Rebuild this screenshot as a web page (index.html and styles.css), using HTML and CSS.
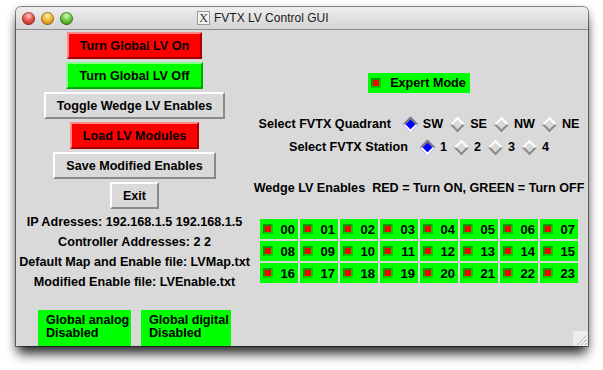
FILE: index.html
```html
<!DOCTYPE html>
<html lang="en">
  <head>
    <meta charset="UTF-8" />
    <title>FVTX LV Control GUI</title>
    <link rel="stylesheet" href="styles.css">
  </head>
  <body>
    <div class="window">
      <div class="titlebar">
        <div class="lights">
          <span class="light close"></span>
          <span class="light minimize"></span>
          <span class="light zoom"></span>
        </div>
        <div class="title"><span class="x-icon">X</span>FVTX LV Control GUI</div>
      </div>
      <div class="content">
        <div class="left">
          <button class="tk red">Turn Global LV On</button>
          <button class="tk green">Turn Global LV Off</button>
          <button class="tk">Toggle Wedge LV Enables</button>
          <button class="tk red">Load LV Modules</button>
          <button class="tk">Save Modified Enables</button>
          <button class="tk">Exit</button>
          <div class="info">
            <p>IP Adresses: 192.168.1.5 192.168.1.5</p>
            <p>Controller Addresses: 2 2</p>
            <p>Default Map and Enable file: LVMap.txt</p>
            <p>Modified Enable file: LVEnable.txt</p>
          </div>
          <div class="status-row">
            <div class="status">Global analog<br>Disabled</div>
            <div class="status">Global digital<br>Disabled</div>
          </div>
        </div>
        <div class="right">
          <label class="expert"><span class="ind"></span>Expert Mode</label>
          <div class="radio-row">
            <span class="radio-label">Select FVTX Quadrant</span>
            <span class="option"><span class="diamond on"></span>SW</span>
            <span class="option"><span class="diamond"></span>SE</span>
            <span class="option"><span class="diamond"></span>NW</span>
            <span class="option"><span class="diamond"></span>NE</span>
          </div>
          <div class="radio-row">
            <span class="radio-label">Select FVTX Station</span>
            <span class="option"><span class="diamond on"></span>1</span>
            <span class="option"><span class="diamond"></span>2</span>
            <span class="option"><span class="diamond"></span>3</span>
            <span class="option"><span class="diamond"></span>4</span>
          </div>
          <div class="legend">Wedge LV Enables  RED = Turn ON, GREEN = Turn OFF</div>
          <div class="wedges" id="wedges">
            <!-- Wedge cells are added here -->
          </div>
        </div>
      </div>
      <svg class="grip" width="15" height="15" viewBox="0 0 15 15">
        <rect width="15" height="15" fill="#ececec" />
        <path d="M4 14 L14 4 M8 14 L14 8 M12 14 L14 12" stroke="#8a8a8a" stroke-width="1" stroke-dasharray="1 1" />
      </svg>
    </div>
    <script>
      const wedges = document.getElementById("wedges");

      for (let i = 0; i < 24; i++) {
        const cell = document.createElement("label");
        cell.className = "wedge";
        cell.innerHTML = `<span class="ind"></span><span>${String(i).padStart(2, "0")}</span>`;
        wedges.appendChild(cell);
      }
    </script>
  </body>
</html>
```

FILE: styles.css
```css
body {
  margin: 0;
  min-height: 370px;
  background-color: white;
  font-family: "Liberation Sans", Arial, sans-serif;
}
.window {
  position: relative;
  margin: 7px 0 0 16px;
  width: 572px;
  height: 339px;
  background-color: #d9d9d9;
  border-radius: 5px 5px 0 0;
  box-shadow: 0 0 0 1px rgba(0, 0, 0, 0.45), 0 3px 10px rgba(0, 0, 0, 0.3), 0 10px 12px -2px rgba(0, 0, 0, 0.75);
  overflow: hidden;
}
.titlebar {
  display: flex;
  align-items: center;
  height: 22px;
  border-bottom: 1px solid #8c8c8c;
  background: linear-gradient(#eeeeee, #d4d4d4);
}
.lights {
  display: flex;
  gap: 6px;
  margin-left: 6px;
}
.light {
  width: 13px;
  height: 13px;
  border-radius: 50%;
  box-shadow: inset 0 0 0 1px rgba(0, 0, 0, 0.3);
}
.light.close {
  background: radial-gradient(circle at 50% 30%, #ffc9c5 0, #e8504a 45%, #a8201a 100%);
}
.light.minimize {
  background: radial-gradient(circle at 50% 30%, #fff0b0 0, #f0b030 45%, #b06a00 100%);
}
.light.zoom {
  background: radial-gradient(circle at 50% 30%, #d8ffc0 0, #6cc43a 45%, #2f7a10 100%);
}
.title {
  display: flex;
  align-items: center;
  margin-left: 124px;
  font-family: "Lucida Grande", "Liberation Sans", sans-serif;
  font-size: 12px;
  color: #1a1a1a;
}
.x-icon {
  width: 11px;
  height: 12px;
  margin-right: 4px;
  border: 1px solid #9a9a9a;
  background-color: #f4f4f4;
  font-family: "Liberation Serif", serif;
  font-size: 12px;
  line-height: 12px;
  text-align: center;
  color: #333;
}
.content {
  display: flex;
  font-size: 12.6px;
  font-weight: bold;
  color: black;
}
.left {
  display: flex;
  flex-direction: column;
  align-items: center;
  gap: 3px;
  width: 229px;
  margin-left: 4px;
  padding-top: 2px;
}
.tk {
  box-sizing: border-box;
  height: 27px;
  padding: 0 11px;
  border: 2px solid;
  border-color: #ffffff #8a8a8a #8a8a8a #ffffff;
  background-color: #d9d9d9;
  font-family: inherit;
  font-size: 12.6px;
  font-weight: bold;
  color: black;
}
.tk.red {
  background-color: #ff0000;
  border-color: #ff8a8a #a80000 #a80000 #ff8a8a;
}
.tk.green {
  background-color: #00ff00;
  border-color: #8aff8a #00a800 #00a800 #8aff8a;
}
.info {
  text-align: center;
  white-space: nowrap;
}
.info p {
  margin: 0;
  line-height: 20px;
}
.status-row {
  display: flex;
  gap: 10px;
  margin-top: 15px;
}
.status {
  width: 93px;
  height: 38px;
  box-sizing: border-box;
  padding: 4px 0 0 8px;
  background-color: #00ff00;
  line-height: 13px;
  white-space: nowrap;
}
.status + .status {
  width: 90px;
}
.right {
  display: flex;
  flex-direction: column;
  align-items: center;
  width: 332px;
  margin-left: 4px;
  padding-top: 43px;
}
.expert {
  display: flex;
  align-items: center;
  gap: 9px;
  height: 20px;
  padding: 0 4px 0 3px;
  background-color: #00ff00;
}
.ind {
  box-sizing: border-box;
  width: 10px;
  height: 10px;
  border: 2px solid;
  border-color: #009a00 #00cc00 #00cc00 #009a00;
  background-color: #ff0000;
}
.radio-row {
  display: flex;
  align-items: center;
  height: 20px;
  margin-top: 3px;
  white-space: nowrap;
}
.expert + .radio-row {
  margin-top: 21px;
}
.radio-label {
  margin-right: 5px;
}
.option {
  display: flex;
  align-items: center;
  gap: 5px;
  margin-left: 7px;
}
.diamond {
  width: 11px;
  height: 11px;
  margin: 0 2px;
  box-sizing: border-box;
  transform: rotate(45deg);
  border: 2px solid;
  border-color: #ffffff #8a8a8a #8a8a8a #ffffff;
  background-color: #d9d9d9;
}
.diamond.on {
  border-color: #7a7a7a #ffffff #ffffff #7a7a7a;
  background-color: #0000ff;
}
.legend {
  margin-top: 21px;
  line-height: 20px;
  white-space: pre;
}
.wedges {
  display: grid;
  grid-template-columns: repeat(8, 38px);
  grid-auto-rows: 20px;
  gap: 2px;
  margin-top: 21px;
}
.wedge {
  display: flex;
  align-items: center;
  justify-content: space-between;
  padding: 0 3px;
  background-color: #00ff00;
  font-size: 13px;
}
.grip {
  position: absolute;
  right: 0;
  bottom: 0;
}
```
